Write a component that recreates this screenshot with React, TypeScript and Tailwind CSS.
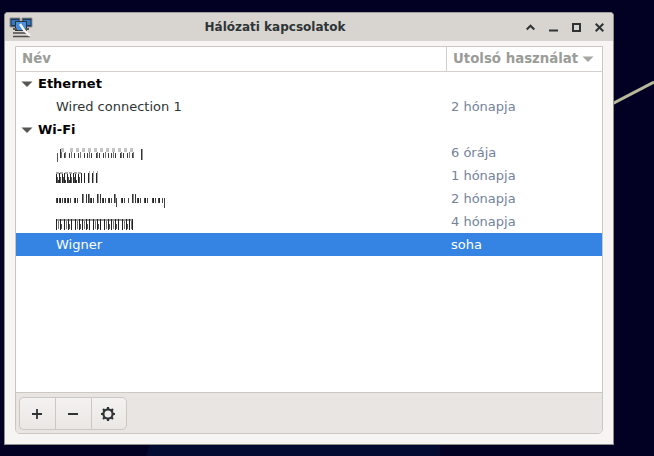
import React from "react";

const C = "#2e3436";
type B = [number, number, number, number, string];

function Bars({ w, bars }: { w: number; bars: B[] }) {
  return (
    <svg width={w} height={23} viewBox={`0 0 ${w} 23`} shapeRendering="crispEdges" className="block">
      {bars.map(([x, y, bw, h, f], i) => (
        <rect key={i} x={x} y={y} width={bw} height={h} fill={f} />
      ))}
    </svg>
  );
}

const col = (xs: number[], y: number, h: number, f: string, w = 1): B[] => xs.map((x) => [x, y, w, h, f] as B);

const row1: B[] = [
  ...col([5, 14, 20, 26, 32, 38, 44, 50, 56, 62, 68, 74], 7, 4, "#c4c4c4", 3),
  ...col([1, 8, 13, 18, 22, 28, 31, 35, 40, 43, 47, 52, 55, 59, 64, 67, 71, 76], 12, 5, "#3a3a3a"),
  ...col([5, 9, 15, 24, 33, 41, 49, 57, 65, 73, 77], 11, 6, "#777"),
  [1, 12, 1, 9, "#555"],
  [4, 8, 1, 9, "#333"],
  [85, 8, 1, 11, "#333"],
  [86, 8, 1, 11, "#999"],
];

const row2: B[] = [
  ...col([0, 3, 6, 8, 11, 14, 17, 19, 22, 25, 28, 32, 36, 40], 9, 10, "#222"),
  ...col([1, 4, 7, 12, 15, 18, 23], 13, 6, "#555"),
  ...col([2, 9, 13, 20], 16, 3, "#333"),
  ...col([33, 37, 41], 7, 12, "#aaa"),
  ...col([0, 4, 9, 13, 18, 22], 8, 2, "#aaa", 3),
];

const row3: B[] = [
  ...col([0, 3, 6, 8, 11, 14, 18, 21, 34, 37, 46, 49, 52, 55, 65, 68, 72, 81, 84, 88, 91, 96, 99, 102, 106], 11, 5, "#444"),
  ...col([1, 4, 9, 12, 19, 35, 47, 53, 66, 82, 89, 97, 103], 11, 5, "#222"),
  ...col([26, 30, 32, 41, 44, 58, 76, 79], 7, 9, "#333"),
  ...col([27, 33, 42, 59, 77], 7, 9, "#888"),
  [60, 11, 1, 9, "#444"],
  [108, 11, 1, 10, "#444"],
];

const row4: B[] = [
  [1, 9, 76, 2, "#999"],
  ...col([0, 4, 8, 12, 15, 19, 23, 26, 30, 33, 37, 41, 44, 48, 52, 55, 59, 62, 66, 70, 73, 76], 9, 11, "#222"),
  ...col([2, 10, 21, 28, 39, 50, 57, 68, 75], 11, 8, "#777"),
  ...col([5, 13, 24, 31, 42, 53, 60, 71], 14, 5, "#555"),
];

const Row = ({ left, right, selected }: { left: React.ReactNode; right: string; selected?: boolean }) => (
  <div className={`flex h-[23px] items-center ${selected ? "bg-[#3584e4] text-white" : "text-[#2e3436]"}`}>
    <div className="w-[431px] pl-[40px]">{left}</div>
    <div className={`pl-[4px] ${selected ? "text-white" : "text-[#73839a]"}`}>{right}</div>
  </div>
);

const Group = ({ label }: { label: string }) => (
  <div className="flex h-[23px] items-center pl-[5px] font-bold text-black">
    <svg width="12" height="6" viewBox="0 0 12 6" className="mr-[5px]"><path d="M0.5 0.5h11L6 6z" fill="#555753" /></svg>
    {label}
  </div>
);

const ToolBtn = ({ children, last, first }: { children: React.ReactNode; last?: boolean; first?: boolean }) => (
  <div className={`flex h-[33px] w-[36px] items-center justify-center border-y border-[#cdc7c2] bg-gradient-to-b from-[#f4f2f1] to-[#eae7e4] pr-[2px] ${first ? "rounded-l-[5px] border-l" : "border-l"} ${last ? "rounded-r-[5px] border-r" : ""}`}>
    {children}
  </div>
);

export default function App() {
  return (
    <div className="relative h-[456px] w-[654px] overflow-hidden bg-[#020124] pl-[4px] pt-[12px] text-[13px] leading-none [font-family:'DejaVu_Sans',sans-serif]">
      <svg className="absolute left-[613px] top-[80px]" width="41" height="26" viewBox="0 0 41 26">
        <path d="M0 23.5L41 2" stroke="#b9b99b" strokeWidth="3" fill="none" />
      </svg>
      <svg className="absolute left-[140px] top-[444px]" width="300" height="12" viewBox="0 0 300 12">
        <path d="M6 12L10 0H300V12z" fill="#030b32" />
      </svg>
      <div className="relative flex h-[433px] w-[610px] flex-col rounded-t-[4px] border border-[#8f8f8a] border-t-[#a09e9a] bg-[#f6f5f4]">
        <div className="flex h-[28px] shrink-0 items-center rounded-t-[4px] bg-[#d8d4d0] pl-[4px] pr-[9px]">
          <svg width="24" height="24" viewBox="0 0 24 24" className="shrink-0">
            <path d="M1 3h10v9H1zM13 3h10v9H13z" fill="#20354f" stroke="#8a8f94" />
            <rect x="2.5" y="5" width="7" height="5" fill="#2f78c4" />
            <rect x="14.5" y="5" width="7" height="5" fill="#2f78c4" />
            <rect x="6.5" y="6.5" width="11" height="9" fill="#4a8fdc" stroke="#2e3436" />
            <path d="M4 14h4M16 14h4" stroke="#555753" strokeWidth="2" />
            <path d="M4 18h14M4 21.5h17" stroke="#4a4a48" strokeWidth="1.6" />
            <path d="M11 9l4 6 6 6" stroke="#f4f4f2" strokeWidth="2.4" fill="none" />
          </svg>
          <div className="flex-1 pr-[9px] text-center text-[12px] font-bold text-[#2e3436]">Hálózati kapcsolatok</div>
          <div className="flex items-center gap-[14px]">
            <svg width="9" height="9" viewBox="0 0 9 9"><path d="M0.7 6.5L4.5 2.7L8.3 6.5" stroke={C} strokeWidth="2" fill="none" /></svg>
            <svg width="9" height="9" viewBox="0 0 9 9"><path d="M0 7.5h9" stroke={C} strokeWidth="2" fill="none" /></svg>
            <svg width="9" height="9" viewBox="0 0 9 9"><rect x="1" y="1" width="7" height="7" stroke={C} strokeWidth="2" fill="none" /></svg>
            <svg width="9" height="9" viewBox="0 0 9 9"><path d="M0.7 0.7l7.6 7.6M8.3 0.7l-7.6 7.6" stroke={C} strokeWidth="2" fill="none" /></svg>
          </div>
        </div>
        <div className="flex min-h-0 flex-1 px-[10px] pb-[10px] pt-[5px]">
          <div className="flex flex-1 flex-col overflow-hidden rounded-b-[5px] border border-[#cdc7c2]">
            <div className="flex h-[25px] shrink-0 items-center border-b border-[#d5d0cc] bg-white text-[13.33px] font-bold text-[#9a9c98]">
              <div className="w-[430px] pl-[6px]">Név</div>
              <div className="flex h-full flex-1 items-center border-l border-[#d5d0cc] pl-[6px]">
                Utolsó használat
                <svg width="12" height="6" viewBox="0 0 12 6" className="ml-[4px]"><path d="M0.5 0.5h11L6 6z" fill="#a4a6a2" /></svg>
              </div>
            </div>
            <div className="flex-1 bg-white">
              <Group label="Ethernet" />
              <Row left="Wired connection 1" right="2 hónapja" />
              <Group label="Wi-Fi" />
              <Row right="6 órája" left={<Bars w={90} bars={row1} />} />
              <Row right="1 hónapja" left={<Bars w={90} bars={row2} />} />
              <Row right="2 hónapja" left={<Bars w={112} bars={row3} />} />
              <Row right="4 hónapja" left={<Bars w={80} bars={row4} />} />
              <Row selected left="Wigner" right="soha" />
            </div>
            <div className="flex h-[41px] shrink-0 items-start border-t border-[#cdc7c2] bg-[#e8e5e2] pl-[3px] pt-[4px]">
              <ToolBtn first>
                <svg width="12" height="12" viewBox="0 0 12 12"><path d="M6 1v10M1 6h10" stroke={C} strokeWidth="1.8" /></svg>
              </ToolBtn>
              <ToolBtn>
                <svg width="12" height="12" viewBox="0 0 12 12"><path d="M1 6h10" stroke={C} strokeWidth="1.8" /></svg>
              </ToolBtn>
              <ToolBtn last>
                <svg width="16" height="16" viewBox="0 0 16 16">
                  <circle cx="8" cy="8" r="4.6" fill="none" stroke={C} strokeWidth="2.2" />
                  <path d="M8 1v2.5M8 12.5V15M1 8h2.5M12.5 8H15M3 3l1.8 1.8M11.2 11.2L13 13M13 3l-1.8 1.8M4.8 11.2L3 13" stroke={C} strokeWidth="2.2" />
                </svg>
              </ToolBtn>
            </div>
          </div>
        </div>
      </div>
    </div>
  );
}
